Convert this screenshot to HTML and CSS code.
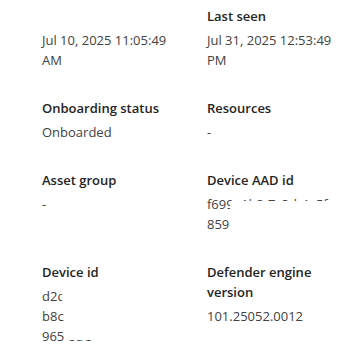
FILE: index.html
```html
<!DOCTYPE html>
<html>
<head>
<meta charset="utf-8">
<link rel="stylesheet" href="styles.css">
</head>
<body>
<div class="details">
  <div class="cell">
    <div class="label"></div>
    <div class="value">Jul 10, 2025 11:05:49 AM</div>
  </div>
  <div class="cell">
    <div class="label">Last seen</div>
    <div class="value">Jul 31, 2025 12:53:49 PM</div>
  </div>
  <div class="cell">
    <div class="label">Onboarding status</div>
    <div class="value">Onboarded</div>
  </div>
  <div class="cell">
    <div class="label">Resources</div>
    <div class="value">-</div>
  </div>
  <div class="cell">
    <div class="label">Asset group</div>
    <div class="value">-</div>
  </div>
  <div class="cell">
    <div class="label">Device AAD id</div>
    <div class="value">
      <div class="redact-line"><span class="nowrap">f699e1b2-7c3d-4e5f</span><span class="mask mask-bottom"></span></div>
      <div>859</div>
    </div>
  </div>
  <div class="cell">
    <div class="label">Device id</div>
    <div class="value">
      <div><span class="clip clip-a">d2d</span></div>
      <div><span class="clip clip-b">b8c</span></div>
      <div class="redact-line"><span class="nowrap">965 <span class="tail">eae</span></span><span class="mask mask-top"></span></div>
    </div>
  </div>
  <div class="cell">
    <div class="label">Defender engine version</div>
    <div class="value">101.25052.0012</div>
  </div>
</div>
</body>
</html>
```

FILE: styles.css
```css
html, body {
  margin: 0;
  padding: 0;
  background: #ffffff;
}

body {
  font-family: "Segoe UI", "Open Sans", "Noto Sans", sans-serif;
  font-size: 13px;
  -webkit-font-smoothing: antialiased;
}

.details {
  display: grid;
  grid-template-columns: 140px 130px;
  column-gap: 25px;
  row-gap: 28px;
  padding: 6px 0 0 42px;
}

.cell {
  display: flex;
  flex-direction: column;
}

.label {
  min-height: 20px;
  line-height: 20px;
  font-weight: 600;
  color: #242424;
}

.value {
  margin-top: 4px;
  line-height: 20px;
  color: #424242;
}

.redact-line {
  position: relative;
  overflow: hidden;
  height: 20px;
}

.nowrap {
  white-space: nowrap;
}

.mask {
  position: absolute;
  background: #ffffff;
}

.mask-bottom {
  left: 23px;
  top: 7px;
  right: 0;
  bottom: 0;
}

.mask-top {
  left: 22px;
  top: 0;
  right: 0;
  bottom: 6px;
}

.clip {
  display: inline-block;
  overflow: hidden;
  vertical-align: top;
  white-space: nowrap;
}

.clip-a {
  width: 20px;
}

.clip-b {
  width: 22px;
}

.tail {
  letter-spacing: 1px;
}
```
